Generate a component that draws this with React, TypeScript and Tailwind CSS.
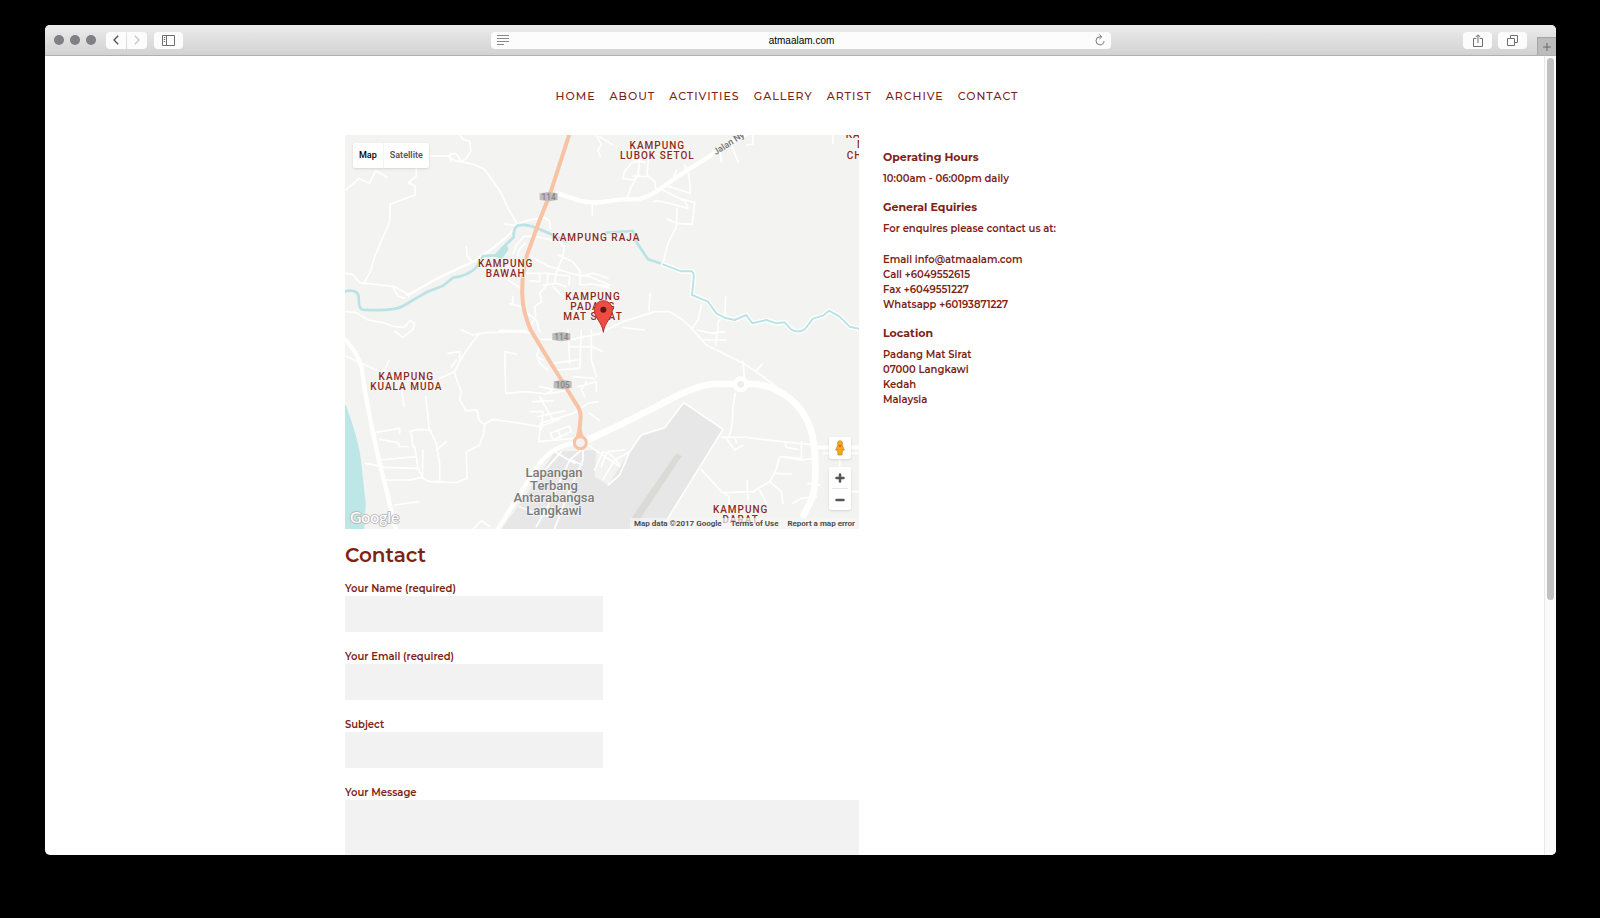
import { Minus, Plus } from "lucide-react";

const NAV_ITEMS = ["Home", "About", "Activities", "Gallery", "Artist", "Archive", "Contact"];

const SIDE_STREETS = [
  "M18 180 L58 146 L90 160 L108 122 L142 142",
  "M230 112 V138 L207 158 L226 168 L226 195 L152 222 L150 275 L120 345 L105 380 L92 425 L72 462",
  "M264 78 L325 78 L345 92 L400 102 L435 118 L485 190 L505 235 L530 278",
  "M362 15 L370 28 L390 34 L394 62 L380 85 L366 95 L348 70 L330 74 L334 94",
  "M18 430 L40 434 L60 458 L95 462 L165 470 L200 490 L208 500",
  "M160 472 L175 498 L195 505",
  "M380 350 L382 378 L398 396",
  "M18 545 L50 548 L85 570 L130 578 L165 590 L195 592 L210 572 L225 580 L220 598 L190 622 L165 603",
  "M495 282 L525 286 L560 272 L615 262 L630 275 L632 296",
  "M520 372 L530 345 L552 320 L580 318 L660 335 L672 350",
  "M530 400 L538 360 L556 340",
  "M575 380 L625 408 L700 432 L750 440 L810 465",
  "M675 350 L668 385 L650 425 L645 458",
  "M655 375 L700 395 L722 425 L720 465 L760 462 L810 475",
  "M560 430 L620 430 L690 438 L688 465",
  "M600 432 V455 L570 452",
  "M625 432 L622 465 L600 490 L606 515 L585 530 L588 560 L574 585",
  "M505 450 L550 480 M510 520 L550 532 M520 520 V500",
  "M610 465 L650 460 L680 470",
  "M640 470 L670 500 M560 548 L590 570 L600 605 M480 602 H560",
  "M720 440 L760 430 L805 445",
  "M758 225 V255 M770 15 L785 45 L775 60 L782 80",
  "M900 135 L880 150 L850 145 L855 125 L875 100 L900 92",
  "M900 90 L895 135 L872 175 L862 205",
  "M875 85 L915 98 M926 90 L922 135 L945 155 L948 175",
  "M880 138 L920 140",
  "M780 20 L820 45 M1000 148 L1010 120 M1035 105 L1048 135 L1052 190 L975 165",
  "M940 215 L952 212 L990 220 L1045 235 L1038 215 L970 180",
  "M1020 205 L1065 218 L1058 283 L1010 280 L985 268",
  "M1012 235 L1010 290 L985 340 L970 400",
  "M1140 55 L1145 95 M1175 45 L1195 95 M1220 45 L1240 42 L1240 15 M1480 15 V40",
  "M780 465 L805 468 M932 490 L928 540",
  "M605 628 L700 628 L780 610 L850 575 L945 545 L990 545 L1030 570 L1060 598",
  "M1055 598 L1075 570 L1085 525 M1158 500 L1156 555 L1135 575 V605",
  "M850 593 L915 600",
  "M1060 600 L1100 645 L1180 685 L1210 700 L1250 725 L1310 770",
  "M1075 600 L1115 610 L1155 605 M1132 605 L1128 645 M1085 630 L1160 630",
  "M1210 695 L1215 755 M1250 722 L1268 702",
  "M1187 790 L1180 830 L1178 880 L1168 922",
  "M1145 922 L1220 922 L1300 932 L1425 945",
  "M1160 925 L1185 960 L1210 945 M1185 922 L1190 938",
  "M1335 935 L1340 952 L1375 958 M1385 935 V985 L1320 980",
  "M1425 985 L1385 990 L1320 980 L1308 1022 L1290 1055 L1240 1085 L1145 1088",
  "M1308 1030 L1355 1032 M1290 1055 L1325 1085 L1330 1120",
  "M1085 1018 L1145 1085 L1168 1100 L1170 1145 M1222 1050 L1225 1110 M1260 1080 L1280 1120",
  "M1360 1120 L1385 1105 L1430 1100 M1405 1060 L1440 1065",
  "M1450 970 H1558 M1500 970 V1010 M1535 1085 H1558",
  "M18 678 L70 702 L110 720 M148 690 L135 722 L110 730",
  "M420 610 L388 650 L362 690 L345 725 L300 745",
  "M325 670 L360 665 L360 690 M335 712 L350 690 M345 728 L355 760 L365 785 L360 808 L378 842 L412 840 L418 870 L435 885 L432 910 L420 945 L380 965 L382 1045 L350 1058 L270 1055",
  "M365 600 L400 615 L440 608 L520 605 L575 608",
  "M258 800 L264 850 L268 895 L290 940 L300 1000 L300 1050 M185 780 L194 830",
  "M435 882 L460 868 L530 878 L600 890 L660 868",
  "M495 665 L498 790 L560 785 L620 792 L640 778 L600 770",
  "M495 665 L530 672 M592 672 L600 700 L625 720 M600 640 L592 680 L610 690",
  "M105 908 L180 895 L180 910 M120 928 L175 938 L180 950 L205 950",
  "M210 905 L232 898 L275 900 M215 910 L220 950 M120 990 L230 980 L235 1015 L120 1012",
  "M230 980 L225 950 M235 1015 L250 1045 L270 1055 L310 1055 M250 960 L248 1045 M290 960 L320 935",
  "M78 1000 L130 1010 M140 1050 L215 1050 L250 1040 M165 1125 L238 1115",
  "M598 935 L602 880 L700 850 M598 935 L700 925",
  "M632 910 L688 888 L695 905 L640 930Z M655 902 L662 918",
  "M575 845 L610 845 L605 900 M580 815 L640 812 M595 860 L675 842",
  "M600 800 L640 870 M630 790 L690 780",
  "M650 720 L720 715 L725 600 M640 700 L700 692 L712 690 M690 650 L760 650 L790 665",
  "M755 600 V690 L770 740 M685 600 L690 700 M700 740 L765 745 M715 770 L770 755 L770 785",
  "M735 800 L725 780 L740 755 M700 850 L745 820 L775 815 M750 850 L780 872",
  "M650 968 L705 1000 M665 965 L580 1060 M725 960 L690 990 L640 1100 L590 1190",
  "M730 960 V990 L690 1080 L645 1195 M540 1130 L600 1155 L640 1160 M695 990 L728 1005",
  "M745 945 L840 1010 M765 1020 L790 965 L815 975 L840 1005",
  "M785 1010 L800 970 M805 1065 L840 1035 L870 965 L825 990 L790 1048 M805 965 L855 960",
  "M400 1197 L425 1172 L450 1190",
];

const RIVER_EAST =
  "M970 403L1025 424L1056 424Q1064 428 1062 445L1057 495L1105 515L1130 550L1155 563L1185 570L1220 555L1238 580L1280 570L1310 580L1335 577L1352 596Q1372 612 1395 598L1420 566L1450 557L1468 542L1500 560L1530 590L1560 597";

const PLACES = [
  { x: 953, y: 56, lines: ["KAMPUNG", "LUBOK SETOL"] },
  { x: 770, y: 334, lines: ["KAMPUNG RAJA"] },
  { x: 498, y: 411, lines: ["KAMPUNG", "BAWAH"] },
  { x: 760, y: 509, lines: ["KAMPUNG", "PADANG", "MAT SIRAT"] },
  { x: 200, y: 750, lines: ["KAMPUNG", "KUALA MUDA"] },
  { x: 1203, y: 1149, lines: ["KAMPUNG", "DARAT"] },
];

const ROUTES = [
  { x: 627, y: 200, label: "114" },
  { x: 665, y: 620, label: "114" },
  { x: 669, y: 764, label: "105" },
];

function SidebarIcon() {
  return (
    <svg viewBox="0 0 13 11" className="h-[11px] w-[13px]" fill="none" stroke="#6f6f6f">
      <path d="M.5.5h12v10H.5zM4.5.5v10M1.8 2.5h1.4M1.8 4.5h1.4M1.8 6.5h1.4" />
    </svg>
  );
}

function ShareIcon() {
  return (
    <svg viewBox="0 0 10 13" className="h-[13px] w-[10px]" fill="none" stroke="#6f6f6f">
      <path d="M3.4 4.5H.5v8h9v-8H6.6M5 9V1M2.8 3 5 .8 7.2 3" />
    </svg>
  );
}

function TabsIcon() {
  return (
    <svg viewBox="0 0 11 11" className="size-[11px]" fill="none" stroke="#6f6f6f">
      <path d="M.5 3.5h7v7h-7zM3.5 3.5v-3h7v7h-3" />
    </svg>
  );
}

function ReloadIcon() {
  return (
    <svg viewBox="0 0 10 12" className="h-3 w-[10px]" fill="none" stroke="#777">
      <path d="M6.2 2.8H5A4 4 0 1 0 9 7M4.4.5 6.8 2.8 4.4 5.1" />
    </svg>
  );
}

function Chevron({ flip = false }: { flip?: boolean }) {
  return (
    <svg viewBox="0 0 6 10" className="h-[10px] w-[6px]" fill="none" stroke={flip ? "#c8c8c8" : "#555"} strokeWidth="1.4">
      <path d={flip ? "M.8.7 5 5 .8 9.3" : "M5.2.7 1 5l4.2 4.3"} />
    </svg>
  );
}

function Toolbar() {
  return (
    <header className="grid h-[31px] shrink-0 grid-cols-[1fr_minmax(0,620px)_1fr] border-b border-[#b0b0b0] bg-linear-to-b from-[#ececec] to-[#d2d2d2]">
      <div className="flex items-center pl-[9px]">
        <div className="flex gap-[6px]">
          <button aria-label="Close" className="size-[10px] rounded-full bg-[#7f7f84]" />
          <button aria-label="Minimize" className="size-[10px] rounded-full bg-[#7f7f84]" />
          <button aria-label="Zoom" className="size-[10px] rounded-full bg-[#7f7f84]" />
        </div>
        <div className="ml-[10px] flex gap-px">
          <button aria-label="Back" className="flex h-[17px] w-5 items-center justify-center rounded-l-sm bg-[#fcfcfc]">
            <Chevron />
          </button>
          <button aria-label="Forward" className="flex h-[17px] w-5 items-center justify-center rounded-r-sm bg-[#fcfcfc]">
            <Chevron flip />
          </button>
        </div>
        <button aria-label="Sidebar" className="ml-[7px] flex h-[17px] w-[29px] items-center justify-center rounded-sm bg-[#fcfcfc]">
          <SidebarIcon />
        </button>
      </div>

      <div className="flex h-[17px] items-center self-center rounded-sm bg-[#fcfcfc] px-[6px]">
        <svg viewBox="0 0 12 10" className="h-[10px] w-3" stroke="#8a8a8a">
          <path d="M0 .5h12M0 3.5h12M0 6.5h12M0 9.5h7" />
        </svg>
        <input
          aria-label="Address"
          defaultValue="atmaalam.com"
          className="h-[17px] min-w-0 flex-1 bg-transparent text-center font-['Liberation_Sans',sans-serif] text-[10px] text-black outline-none"
        />
        <button aria-label="Reload">
          <ReloadIcon />
        </button>
      </div>

      <div className="flex items-center justify-end">
        <button aria-label="Share" className="flex h-[17px] w-[29px] items-center justify-center rounded-sm bg-[#fcfcfc]">
          <ShareIcon />
        </button>
        <button aria-label="Show tabs" className="mr-[10px] ml-[6px] flex h-[17px] w-[29px] items-center justify-center rounded-sm bg-[#fcfcfc]">
          <TabsIcon />
        </button>
        <button aria-label="New tab" className="flex h-[18px] w-[19px] items-center justify-center self-end border-t border-l border-[#a5a5a5] bg-[#bcbcbc]">
          <Plus className="size-3 text-[#666]" strokeWidth={2} />
        </button>
      </div>
    </header>
  );
}

function MapDrawing() {
  return (
    <svg viewBox="16 15 1542 1182" preserveAspectRatio="xMidYMid slice" className="size-full font-[Roboto,sans-serif]">
      <rect width="1600" height="1200" fill="#f3f3f1" />
      <path d="M18 825Q58 930 65 1000L78 1120L74 1197H10V825Z" fill="#bde7e6" />
      <path
        d="M1032 818L1150 898L965 1197H485L560 1095L645 965L770 960L765 1040L805 1065L870 965L905 915L975 893Z"
        fill="#e7e7e7"
      />
      <path d="M870 965L905 915L975 893L1032 818L1150 898L965 1197" fill="none" stroke="#fff" strokeWidth="5" />
      <path d="M1010 970L1026 978L895 1175L868 1175Z" fill="#dadad6" />

      <g fill="none" stroke="#fff" strokeLinejoin="round" strokeLinecap="round">
        <path d={SIDE_STREETS.join(" ")} strokeWidth="5" />
        <path d="M205 495L300 442L400 395L450 362L500 322L522 300" strokeWidth="7" />
        <path d="M16 628Q52 668 66 712L75 780L100 910L120 1000L140 1080L168 1197" strokeWidth="13" />
        <path d="M655 190L720 212Q760 222 800 214L840 209L900 207Q930 200 960 178L1020 135L1100 85L1160 45L1225 10" strokeWidth="13" />
        <path d="M470 1205L540 1092L600 1000Q640 950 700 940L780 912" strokeWidth="13" />
        <path d="M745 930L860 875L960 825Q1060 768 1120 762H1250Q1330 775 1380 835Q1425 890 1426 990Q1430 1080 1415 1110L1392 1155" strokeWidth="20" />
        <path d="M1425 952H1558" strokeWidth="11" />
        <circle cx="1203" cy="763" r="17" strokeWidth="14" fill="#eee" />
      </g>

      <g fill="none" stroke="#b9e3e5" strokeLinejoin="round" strokeLinecap="round">
        <path d="M16 484Q50 476 57 498Q56 535 68 539Q160 545 190 528L260 487L310 467L340 443Q385 438 410 412L430 378L468 376L492 350L522 322Q520 295 535 286Q560 280 600 298L640 315L680 335M800 308L880 303L890 335L925 388L970 403" strokeWidth="8" />
        <path d="M465 378L500 346L504 358L486 385Z" fill="#b9e3e5" strokeWidth="4" />
        <path d={RIVER_EAST} stroke="#fff" strokeWidth="14" />
        <path d={RIVER_EAST} strokeWidth="6" />
      </g>

      <g fill="none" stroke="#f8c2a4">
        <path d="M690 10L630 195L600 270L562 375Q545 440 548 500Q550 545 572 598L600 645L665 750L705 815Q724 840 723 860L718 915" strokeWidth="12" />
        <path d="M717 890L710 918H730L723 890Z" fill="#f8c2a4" strokeWidth="2" />
        <circle cx="722" cy="938" r="18" strokeWidth="9" fill="#f3f3f1" />
      </g>

      {ROUTES.map((route) => (
        <g key={`${route.x}-${route.y}`}>
          <path
            transform={`translate(${route.x} ${route.y})`}
            d="M-27-10L0-14L27-10V10L0 14L-27 10Z"
            fill="#bdbdbd"
          />
          <text x={route.x} y={route.y + 9} textAnchor="middle" fontSize="25" fill="#888">
            {route.label}
          </text>
        </g>
      ))}

      <g fontSize="30" fontWeight="500" letterSpacing="3" fill="#8b2a1d" stroke="#f7f7f5" strokeWidth="5" paintOrder="stroke">
        {PLACES.map((place) => (
          <text key={place.x} textAnchor="middle">
            {place.lines.map((line, i) => (
              <tspan key={line} x={place.x} y={place.y + i * 31}>
                {line}
              </tspan>
            ))}
          </text>
        ))}
        <text x="1518" y="24">KAM</text>
        <text x="1552" y="54">M</text>
        <text x="1521" y="86">CH</text>
      </g>
      <text transform="translate(1128 76) rotate(-33)" fontSize="27" fill="#777">
        Jalan Ny
      </text>
      <g fontSize="39" fontWeight="500" fill="#7b7b7b" stroke="#f5f5f5" strokeWidth="4" paintOrder="stroke" textAnchor="middle">
        <text x="643" y="1041">Lapangan</text>
        <text x="643" y="1079">Terbang</text>
        <text x="643" y="1117">Antarabangsa</text>
        <text x="643" y="1155">Langkawi</text>
      </g>
      <text x="31" y="1179" fontSize="47" fontWeight="500" className="font-[Lato,sans-serif]" fill="#fff" stroke="#b5b5b5" strokeWidth="5" paintOrder="stroke">
        Google
      </text>

      <path
        d="M791 607C787 575 764 565 764 539A27 27 0 0 1 818 539C818 565 795 575 791 607Z"
        fill="#ee4c43"
        stroke="#b3312b"
        strokeWidth="3"
      />
      <circle cx="791" cy="539" r="9" fill="#5b1712" />
    </svg>
  );
}

function LocationMap() {
  return (
    <div className="relative h-[394px] overflow-hidden font-[Roboto,sans-serif]">
      <MapDrawing />
      <div className="absolute top-2 left-2 flex h-[25px] rounded-xs bg-white text-[9px] shadow">
        <button className="border-r border-gray-100 px-[6px] font-medium text-black">Map</button>
        <button className="px-[6px] text-[#565656]">Satellite</button>
      </div>
      <div className="absolute right-2 bottom-[19px] flex flex-col gap-2">
        <button aria-label="Street View" className="flex size-[22px] items-center justify-center rounded-xs bg-white shadow">
          <svg viewBox="0 0 10 16" className="h-4 w-[10px]" fill="#f5a81c" stroke="#c07a12" strokeWidth=".6">
            <path d="M2.5 5.2h5L9.3 10l-1 .6-.8-1L7 15H3l-.5-5.4-.8 1-1-.6z" />
            <circle cx="5" cy="3.2" r="2.5" />
            <path d="M3.5 5.6h3L5 7.4z" fill="#d9601a" stroke="none" />
          </svg>
        </button>
        <div className="flex flex-col items-center rounded-xs bg-white text-[#555] shadow">
          <button aria-label="Zoom in" className="flex h-[21px] w-[22px] items-center justify-center">
            <Plus className="size-3" strokeWidth={5} />
          </button>
          <span className="h-px w-4 bg-gray-200" />
          <button aria-label="Zoom out" className="flex h-[21px] w-[22px] items-center justify-center">
            <Minus className="size-3" strokeWidth={5} />
          </button>
        </div>
      </div>
      <div className="absolute right-0 bottom-0 flex h-[11px] items-center gap-[9px] bg-[#f5f5f5]/70 px-1 text-[8px] text-[#444]">
        <span>Map data ©2017 Google</span>
        <a href="#terms">Terms of Use</a>
        <a href="#report">Report a map error</a>
      </div>
    </div>
  );
}

function Field({ id, label, type = "text" }: { id: string; label: string; type?: string }) {
  return (
    <div className="mb-[17px] flex flex-col">
      <label htmlFor={id}>{label}</label>
      <input id={id} type={type} className="h-9 w-full max-w-[258px] bg-[#f2f2f2] px-2 outline-none" />
    </div>
  );
}

function ContactForm() {
  return (
    <form>
      <h1 className="my-3 text-[20px] leading-7 font-semibold">Contact</h1>
      <Field id="name" label="Your Name (required)" />
      <Field id="email" label="Your Email (required)" type="email" />
      <Field id="subject" label="Subject" />
      <div className="flex flex-col">
        <label htmlFor="message">Your Message</label>
        <textarea id="message" className="h-40 w-full resize-none bg-[#f2f2f2] p-2 outline-none" />
      </div>
    </form>
  );
}

function Details() {
  return (
    <aside className="pt-[15px]">
      <h2 className="mb-[6px] text-[11px] font-bold">Operating Hours</h2>
      <p className="mb-[14px]">10:00am - 06:00pm daily</p>
      <h2 className="mb-[6px] text-[11px] font-bold">General Equiries</h2>
      <p className="mb-4">For enquires please contact us at:</p>
      <p className="mb-[14px]">
        Email info@atmaalam.com
        <br />
        Call +6049552615
        <br />
        Fax +6049551227
        <br />
        Whatsapp +60193871227
      </p>
      <h2 className="mb-[6px] text-[11px] font-bold">Location</h2>
      <address className="not-italic">
        Padang Mat Sirat
        <br />
        07000 Langkawi
        <br />
        Kedah
        <br />
        Malaysia
      </address>
    </aside>
  );
}

export default function App() {
  return (
    <div className="flex h-screen flex-col bg-black pt-[25px] pr-11 pb-[63px] pl-[45px]">
      <div className="flex min-h-0 flex-1 flex-col overflow-hidden rounded-[5px] bg-white">
        <Toolbar />
        <div className="flex min-h-0 flex-1">
          <main className="min-w-0 flex-1 overflow-hidden pr-[15px] font-[Montserrat,Inter,sans-serif] text-[10px] leading-[15px] font-semibold text-[#7d2315]">
            <nav className="mb-[31px] flex justify-center gap-[14px] pt-8 text-[11px] leading-4 font-medium tracking-[1px] uppercase">
              {NAV_ITEMS.map((item) => (
                <a key={item} href={`#${item.toLowerCase()}`}>
                  {item}
                </a>
              ))}
            </nav>
            <div className="mx-auto grid max-w-[884px] grid-cols-[minmax(0,1fr)_346px] gap-6">
              <div>
                <LocationMap />
                <ContactForm />
              </div>
              <Details />
            </div>
          </main>
          <div className="w-3 border-l border-[#e8e8e8] bg-[#fafafa] px-[2px] pt-[2px]">
            <div className="h-[68%] rounded-full bg-[#c1c1c1]" />
          </div>
        </div>
      </div>
    </div>
  );
}
